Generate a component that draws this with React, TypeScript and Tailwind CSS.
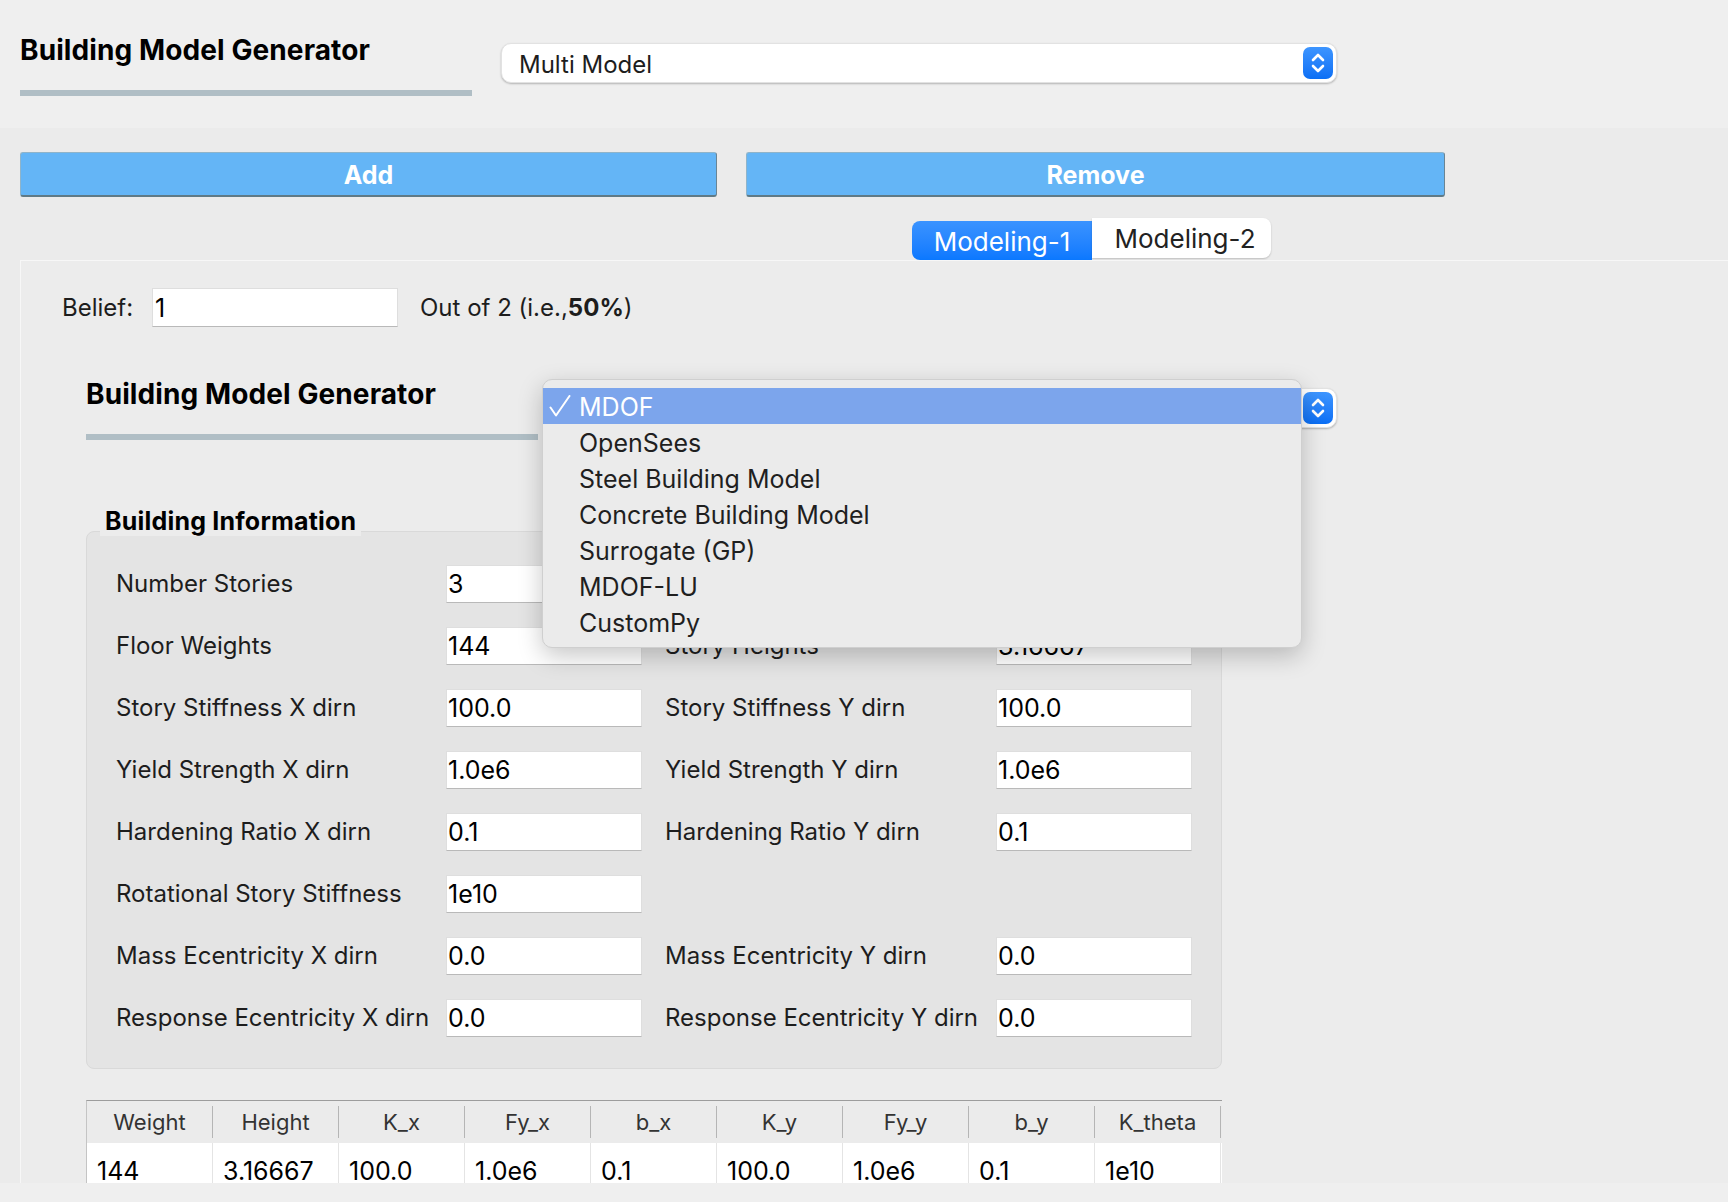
import React from 'react'

const FONT = "font-['Inter','DejaVu_Sans',sans-serif]"

const MODEL_OPTIONS = [
  'MDOF',
  'OpenSees',
  'Steel Building Model',
  'Concrete Building Model',
  'Surrogate (GP)',
  'MDOF-LU',
  'CustomPy',
]

const INFO_ROWS: [string, string, string, string][] = [
  ['Number Stories', '3', '', ''],
  ['Floor Weights', '144', 'Story Heights', '3.16667'],
  ['Story Stiffness X dirn', '100.0', 'Story Stiffness Y dirn', '100.0'],
  ['Yield Strength X dirn', '1.0e6', 'Yield Strength Y dirn', '1.0e6'],
  ['Hardening Ratio X dirn', '0.1', 'Hardening Ratio Y dirn', '0.1'],
  ['Rotational Story Stiffness', '1e10', '', ''],
  ['Mass Ecentricity X dirn', '0.0', 'Mass Ecentricity Y dirn', '0.0'],
  ['Response Ecentricity X dirn', '0.0', 'Response Ecentricity Y dirn', '0.0'],
]

const TABLE_HEAD = ['Weight', 'Height', 'K_x', 'Fy_x', 'b_x', 'K_y', 'Fy_y', 'b_y', 'K_theta']
const TABLE_ROW = ['144', '3.16667', '100.0', '1.0e6', '0.1', '100.0', '1.0e6', '0.1', '1e10']

const Stepper = () => (
  <div className="w-[30px] h-[32px] rounded-[7px] bg-gradient-to-b from-[#3d95ff] to-[#0a6ff5] flex items-center justify-center">
    <svg width="18" height="24" viewBox="0 0 18 24" fill="none">
      <path d="M4 9 L9 4 L14 9" stroke="white" strokeWidth="2.6" strokeLinecap="round" strokeLinejoin="round" />
      <path d="M4 15 L9 20 L14 15" stroke="white" strokeWidth="2.6" strokeLinecap="round" strokeLinejoin="round" />
    </svg>
  </div>
)

// label is optional: the inner one sits under its open popup
const Combo = ({ label, width }: { label?: string; width: string }) => (
  <div
    className={`${width} h-[40px] bg-white rounded-[10px] border border-[#e2e2e2] shadow-[0_1px_2px_rgba(0,0,0,0.25)] flex items-center justify-between pl-[17px] pr-[3px]`}
  >
    <span className="text-[24px] text-[#1d1d1d] pt-[3px]">{label}</span>
    <Stepper />
  </div>
)

const SectionTitle = ({ text }: { text: string }) => (
  <div className="w-[452px] pt-[7px]">
    <div className="text-[28px] leading-[34px] font-bold text-black tracking-[0.1px]">{text}</div>
    <div className="mt-[23px] h-[6px] bg-[#b0bec5]" />
  </div>
)

const Field = ({ value }: { value: string }) => (
  <div className="w-[196px] h-[38px] bg-white border border-[#dedede] border-b-[#b9b9b9] flex items-center pl-[1px] pt-[2px] text-[25px] text-black">
    {value}
  </div>
)

const Check = () => (
  <svg width="22" height="22" viewBox="0 0 22 22" fill="none">
    <path d="M1.5 12.5 L7 20.5 L20.5 1" stroke="white" strokeWidth="2" strokeLinecap="round" strokeLinejoin="round" />
  </svg>
)

export default function App() {
  return (
    <div className={`w-[1728px] h-[1202px] overflow-hidden bg-[#ebebeb] flex flex-col ${FONT}`}>
      {/* Header */}
      <div className="h-[128px] shrink-0 bg-[#efefef] flex items-start pl-[20px] pt-[26px]">
        <SectionTitle text="Building Model Generator" />
        <div className="ml-[29px] mt-[17px]">
          <Combo label="Multi Model" width="w-[836px]" />
        </div>
      </div>

      {/* Add / Remove */}
      <div className="shrink-0 flex gap-[29px] pl-[20px] mt-[24px]">
        <button className="w-[697px] h-[45px] rounded-[3px] bg-[#64b5f6] border border-[#8fb4ca] border-b-2 border-b-[#5f7a86] border-r-[#6a8594] text-white font-bold text-[25px] pt-[3px]">
          Add
        </button>
        <button className="w-[699px] h-[45px] rounded-[3px] bg-[#64b5f6] border border-[#8fb4ca] border-b-2 border-b-[#5f7a86] border-r-[#6a8594] text-white font-bold text-[25px] pt-[3px]">
          Remove
        </button>
      </div>

      {/* Tabs */}
      <div className="shrink-0 h-[63px] flex items-end pl-[912px]">
        <div className="w-[180px] h-[39px] rounded-l-[8px] bg-gradient-to-b from-[#3a93ff] to-[#0a78ff] text-white text-[26px] flex items-center justify-center pt-[1px]">
          Modeling-1
        </div>
        <div className="w-[179px] h-[40px] mb-[2px] rounded-r-[8px] bg-white shadow-[0_1px_2px_rgba(0,0,0,0.2)] text-[#222] text-[26px] flex items-center justify-center pl-[7px] pt-[1px]">
          Modeling-2
        </div>
      </div>

      {/* Tab panel */}
      <div className="relative flex-1 min-h-0 ml-[20px] border-l border-t border-[#f7f7f7] bg-[#ececec] overflow-hidden">
        {/* Belief row */}
        <div className="flex items-center pl-[41px] mt-[27px] text-[24px] text-[#1d1d1d]">
          <span className="w-[90px]">Belief:</span>
          <div className="w-[246px] h-[39px] bg-white border border-[#dedede] border-b-[#b9b9b9] flex items-center pl-[2px] pt-[2px] text-[25px] text-black">
            1
          </div>
          <span className="ml-[22px]">
            Out of 2 (i.e.,<b>50%</b>)
          </span>
        </div>

        {/* Inner generator row */}
        <div className="flex items-start pl-[65px] mt-[43px]">
          <SectionTitle text="Building Model Generator" />
          <div className="ml-[29px] mt-[18px]">
            <Combo width="w-[770px]" />
          </div>
        </div>

        {/* Building Information group */}
        <div className="ml-[65px] mt-[66px]">
          <div className="relative z-10 ml-[14px] inline-block h-[30px] px-[5px] bg-[#ececec] text-[25px] leading-[30px] font-bold text-black tracking-[0.2px]">
            Building Information
          </div>
          <div className="-mt-[5px] w-[1136px] h-[538px] rounded-[8px] border border-[#d9d9d9] bg-[#e4e4e4] pt-[33px] pl-[29px] flex flex-col gap-[24px]">
            {INFO_ROWS.map(([l1, v1, l2, v2]) => (
              <div key={l1} className="flex items-center text-[24px] text-[#1d1d1d]">
                <span className="w-[330px]">{l1}</span>
                <Field value={v1} />
                <span className="w-[23px]" />
                <span className="w-[331px]">{l2}</span>
                {l2 ? <Field value={v2} /> : null}
              </div>
            ))}
          </div>
        </div>

        {/* Floors table */}
        <div className="ml-[65px] mt-[31px] w-[1136px] border-t border-t-[#9c9c9c] border-l border-l-[#c4c4c4]">
          <div className="flex h-[42px] bg-[#ebebeb]">
            {TABLE_HEAD.map((h) => (
              <div key={h} className="w-[126px] h-full flex items-center">
                <span className="flex-1 text-center text-[22px] text-[#333]">{h}</span>
                <span className="w-px h-[32px] bg-[#b5b5b5]" />
              </div>
            ))}
          </div>
          <div className="flex h-[58px] bg-white">
            {TABLE_ROW.map((v, i) => (
              <div
                key={i}
                className="w-[126px] h-full flex items-center pl-[10px] border-r border-[#e4e4e4] text-[25px] text-black"
              >
                {v}
              </div>
            ))}
          </div>
        </div>

        {/* Open popup of the inner combobox */}
        <div className="absolute left-[521px] top-[118px] w-[760px] h-[269px] rounded-[10px] bg-[#ebebeb] border border-[#cfcfcf] shadow-[0_8px_24px_rgba(0,0,0,0.22)] pt-[8px] text-[25px]">
          {MODEL_OPTIONS.map((opt, i) => (
            <div
              key={opt}
              className={`h-[36px] flex items-center ${i === 0 ? 'bg-[#7ca5ec] text-white' : 'text-[#1f1f1f]'}`}
            >
              <span className="w-[36px] pl-[6px] flex items-center">{i === 0 ? <Check /> : null}</span>
              <span className="pt-[3px]">{opt}</span>
            </div>
          ))}
        </div>
      </div>

      {/* Bottom strip */}
      <div className="h-[19px] shrink-0 bg-[#efefef]" />
    </div>
  )
}
